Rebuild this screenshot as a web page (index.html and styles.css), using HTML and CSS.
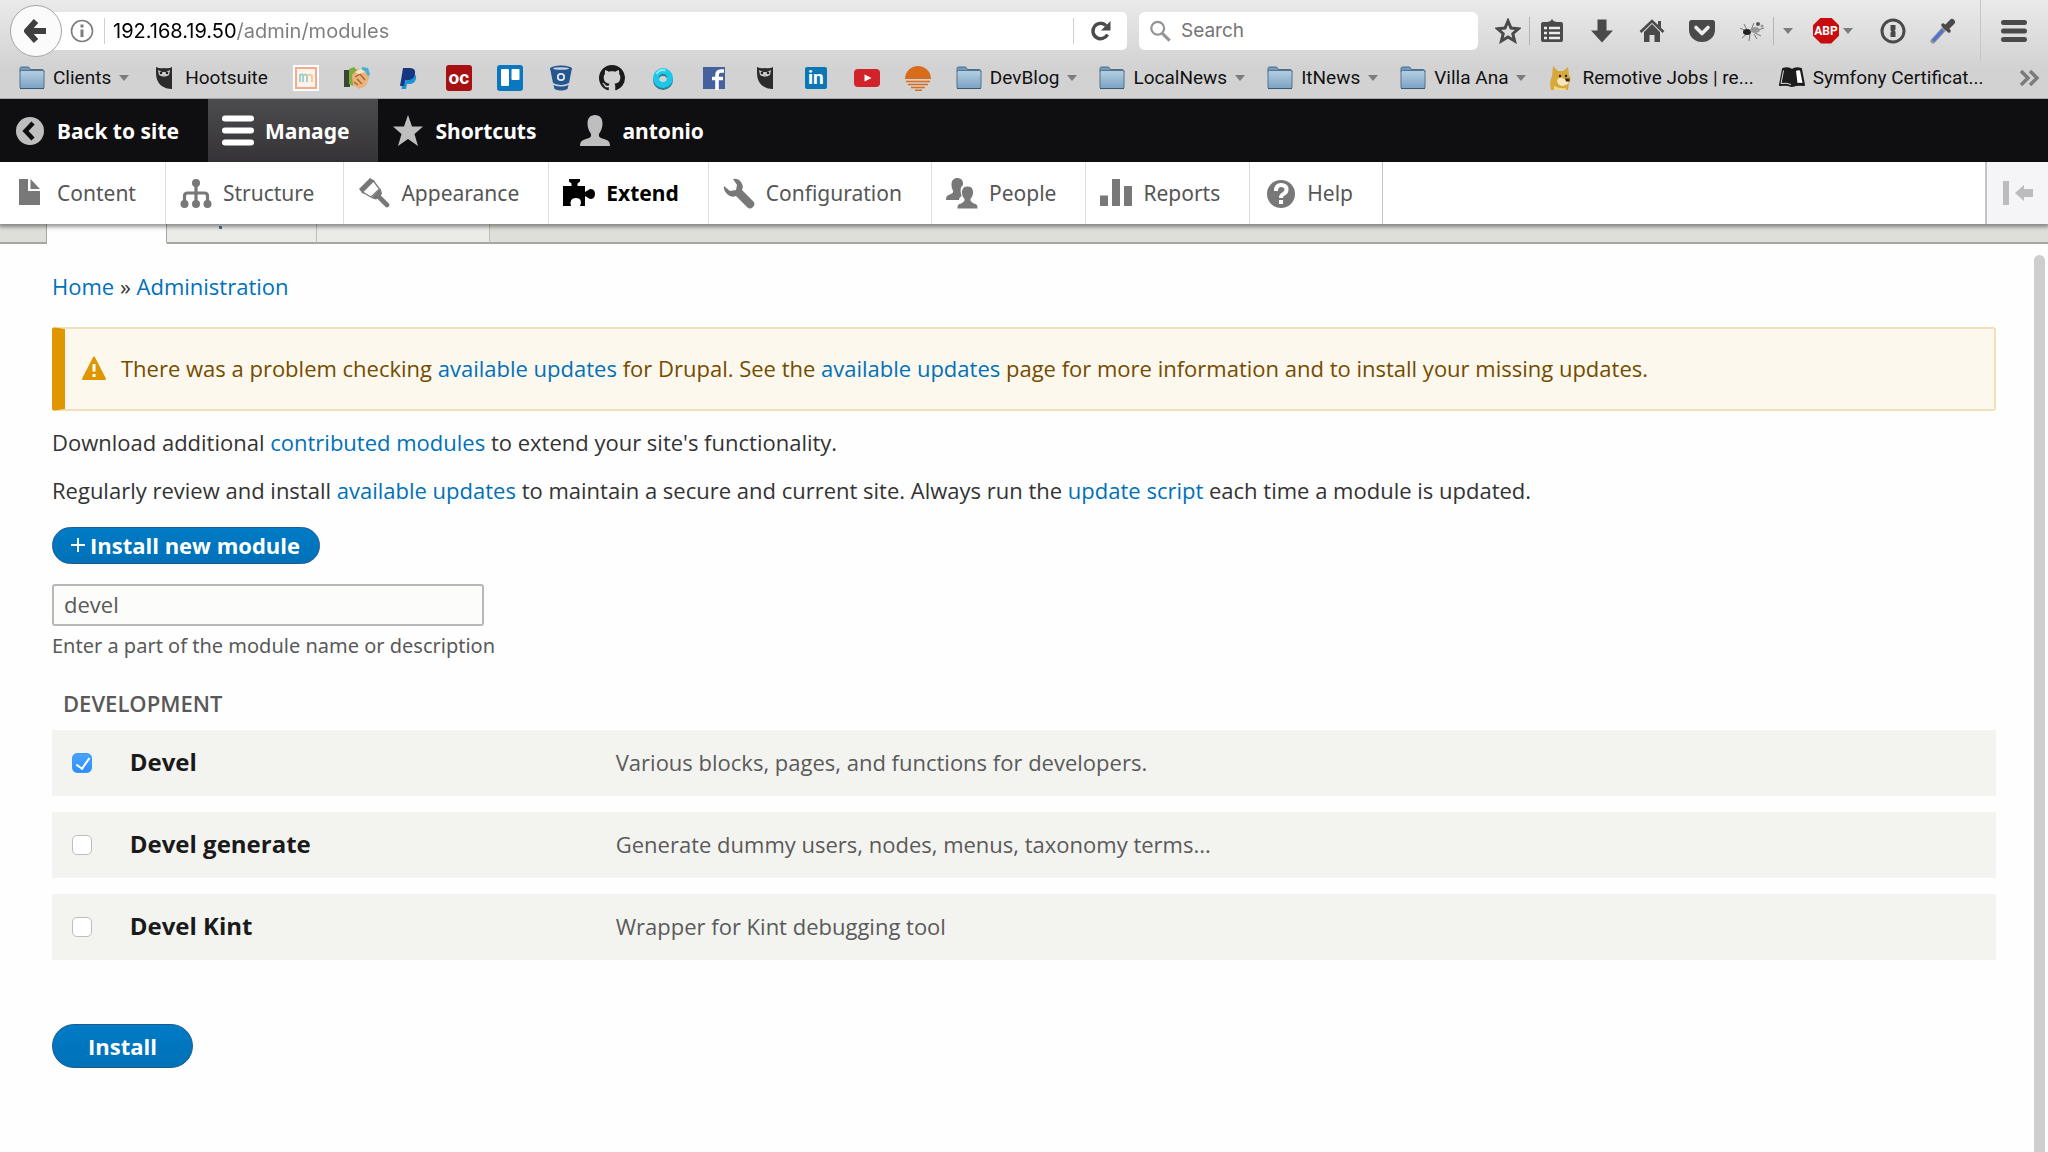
FILE: index.html
```
<!doctype html>
<html lang="en">

<head>
	<meta charset="utf-8">
	<title>Extend</title>
	<link rel="stylesheet" href="styles.css">
</head>

<body>
	<!-- Shared shapes -->
	<svg class="sprite" aria-hidden="true">
		<defs>
			<linearGradient id="folder-fill" x1="0" y1="0" x2="0" y2="1">
				<stop offset="0" stop-color="#b4cfe3"/>
				<stop offset="1" stop-color="#7ba3c4"/>
			</linearGradient>
		</defs>
		<symbol id="folder" viewBox="0 0 26 26">
			<path d="M1 7V3.500Q1 2 2.500 2H9q1 0 1.500 1l.8 1.500H23q2 0 2 2V7z" fill="#6f9abd" stroke="#4d6f8a"/>
			<rect x="1" y="5.500" width="24" height="18" rx="1.500" fill="url(#folder-fill)" stroke="#54738c"/>
			<path d="M1 23.500h24" stroke="#3d5a70"/>
		</symbol>
		<symbol id="owl" viewBox="0 0 26 26">
			<path d="M5 2q4 2 8 1 5 1 8-1v22q-6 0-11-3.500Q5 16 5 8z" fill="#2b2b2b"/>
			<path d="M7 5l4 2h4l4-2-1 5q-5 3-10 0z" fill="#ccc"/>
			<circle cx="10" cy="8" r="1.300" fill="#222"/><circle cx="16" cy="8" r="1.300" fill="#222"/>
			<path d="M12 10h2l-1 2.500z" fill="#aaa"/>
		</symbol>
		<symbol id="caret" viewBox="0 0 10 6"><path d="M0 0h10L5 6z" fill="#7c7b7d"/></symbol>
	</svg>

	<!-- Browser window -->
	<header class="browser">
		<div class="nav-bar">
			<button class="back" aria-label="Back"><svg viewBox="0 0 24 26"><path d="M12 3L3 13l9 10M4 13h18" fill="none" stroke="#3f3f3f" stroke-width="6" stroke-linejoin="round"/></svg></button>
			<div class="url-bar">
				<svg class="info" viewBox="0 0 24 24"><circle cx="12" cy="12" r="10.500" fill="none" stroke="#7d7d7d" stroke-width="1.600"/><path d="M12 10.500V18M12 5.500V8.500" stroke="#7d7d7d" stroke-width="3"/></svg>
				<input class="url" type="text" aria-label="Address" value="192.168.19.50/admin/modules">
				<button class="reload" aria-label="Reload"><svg viewBox="0 0 24 24"><path d="M18.500 15.500A7.700 7.700 0 1 1 17 6.500" fill="none" stroke="#4a4a4a" stroke-width="3.400"/><path d="M21.500 2v9.500H12z" fill="#4a4a4a"/></svg></button>
			</div>
			<div class="search-bar">
				<svg viewBox="0 0 24 24"><circle cx="9.500" cy="9" r="7" fill="none" stroke="#949494" stroke-width="2.400"/><path d="M14.500 14.500l8 8" stroke="#949494" stroke-width="3.400"/></svg>
				<input class="search" type="text" aria-label="Search" placeholder="Search">
			</div>
			<div class="nav-tools">
				<button class="tool star" aria-label="Bookmark this page"><svg viewBox="0 0 26 26"><path d="M13 3l3 7 7.500.700-5.700 5 1.800 7.300L13 19l-6.600 4 1.800-7.300-5.700-5L10 10z" fill="none" stroke="#4a4a4a" stroke-width="3"/></svg></button>
				<button class="tool" aria-label="Bookmarks"><svg viewBox="0 0 26 26"><path d="M9 3.500h2L13 1l2 2.500h2V4h5q2 0 2 2v16q0 2-2 2H4q-2 0-2-2V6q0-2 2-2h5z" fill="#4a4a4a"/><path d="M5 10h3M10 10h11M5 15h3M10 15h11M5 20h3M10 20h11" stroke="#eee" stroke-width="2.600"/></svg></button>
				<button class="tool" aria-label="Downloads"><svg viewBox="0 0 26 26"><path d="M8.500 1.500h9v11H24L13 24.500 2 12.500h6.500z" fill="#4a4a4a"/></svg></button>
				<button class="tool" aria-label="Home"><svg viewBox="0 0 26 26"><path d="M1.500 14L13 3l11.500 11" fill="none" stroke="#4a4a4a" stroke-width="2.600"/><path d="M19 3h3v7l-3-2.500z" fill="#4a4a4a"/><path d="M5 14l8-8 8 8v10h-5.500v-7h-5v7H5z" fill="#4a4a4a"/></svg></button>
				<button class="tool" aria-label="Pocket"><svg viewBox="0 0 26 26"><path d="M2.500 2h21Q26 2 26 5v7a13 12 0 0 1-26 0V5Q0 2 2.500 2z" fill="#4a4a4a"/><path d="M7 9.500l6 6 6-6" fill="none" stroke="#eee" stroke-width="3.600" stroke-linecap="round" stroke-linejoin="round"/></svg></button>
				<button class="tool" aria-label="Firebug"><svg viewBox="0 0 26 26"><g fill="none" stroke="#777" stroke-width="1"><path d="M1 10l6 3M5 6l3 6M3 20l6-5M10 23l1-7M15 5l-3 7M25 10l-9 3M22 18l-6-3M18 21l-3-5"/></g><ellipse cx="8" cy="14" rx="4" ry="3" fill="#222"/><ellipse cx="16" cy="12" rx="5" ry="3" fill="#999"/><circle cx="19" cy="6" r="2" fill="#555"/><circle cx="23" cy="8" r="1.500" fill="#999"/></svg></button>
				<button class="tool-menu" aria-label="Firebug menu"><svg class="caret" viewBox="0 0 10 6"><use href="#caret"/></svg></button>
				<button class="tool abp" aria-label="Adblock Plus">ABP</button>
				<button class="tool-menu abp-menu" aria-label="Adblock menu"><svg class="caret" viewBox="0 0 10 6"><use href="#caret"/></svg></button>
				<button class="tool" aria-label="Passwords"><svg viewBox="0 0 26 26"><circle cx="13" cy="13" r="11" fill="none" stroke="#4a4a4a" stroke-width="3"/><path d="M10.500 7h5v4.500l-1 1 1 1V19h-5v-4.500l1-1-1-1z" fill="#4a4a4a"/></svg></button>
				<button class="tool" aria-label="Color picker"><svg viewBox="0 0 26 26"><path d="M3 23l12-13" stroke="#8f9299" stroke-width="5" stroke-linecap="round"/><path d="M4 22l8-9" stroke="#4d6fd6" stroke-width="3" stroke-linecap="round"/><path d="M13 7l6 6" stroke="#4a4a4a" stroke-width="3.500" stroke-linecap="round"/><path d="M17 9l5-5" stroke="#4a4a4a" stroke-width="6" stroke-linecap="round"/></svg></button>
				<button class="tool menu" aria-label="Menu"><svg viewBox="0 0 26 26"><path d="M2.500 4.500h21M2.500 13h21M2.500 21.500h21" stroke="#4a4a4a" stroke-width="5" stroke-linecap="round"/></svg></button>
			</div>
		</div>
		<nav class="bookmarks" aria-label="Bookmarks toolbar">
			<button class="bookmark"><svg viewBox="0 0 26 26"><use href="#folder"/></svg>Clients<svg class="caret" viewBox="0 0 10 6"><use href="#caret"/></svg></button>
			<a class="bookmark" href="#"><svg viewBox="0 0 26 26"><use href="#owl"/></svg>Hootsuite</a>
			<a class="bookmark" href="#" aria-label="Moqups"><svg viewBox="0 0 26 26"><path d="M0 0h26v26H0z" fill="#fff"/><rect x="3" y="3" width="20" height="20" fill="#fdf3ea" stroke="#f2ab8c" stroke-width="2"/><path d="M7 17v-7q3-2 3 1v6m0-6q3-3 4 0v6" fill="none" stroke="#8ec9c5" stroke-width="1.600"/><path d="M14 11q3-3 5 0v6" fill="none" stroke="#f2c28c" stroke-width="1.600"/></svg></a>
			<a class="bookmark" href="#" aria-label="Handshake"><svg viewBox="0 0 26 26"><path d="M0 5h6v17H0z" fill="#3a4634"/><path d="M5 4l5-2 4 4-5 15-4-2z" fill="#7eae3a"/><path d="M18 2l6 1 2 6-4 7-5-8z" fill="#43b3d3"/><path d="M8 10l6-6 7 2 4 7-3 8-7 3-6-4z" fill="#eab27c"/><path d="M11 12l5-3 5 6M10 17l4 3M13 14l5 5" fill="none" stroke="#a5622e" stroke-width="1.300"/><path d="M11 7l6-3 4 3-6 2z" fill="#fbe5c6"/></svg></a>
			<a class="bookmark" href="#" aria-label="PayPal"><svg viewBox="0 0 26 26"><path d="M9 8h9q4 2 3 6-1.500 5-7 5h-2l-1 5H6.500z" fill="#1b93d6"/><path d="M8 3h7q6 0 5 6-1 6-7.500 6H10l-1 6H5z" fill="#16377f"/></svg></a>
			<a class="bookmark oc" href="#">oc</a>
			<a class="bookmark" href="#" aria-label="Trello"><svg viewBox="0 0 26 26"><rect width="26" height="26" rx="3" fill="#0a78be"/><rect x="4" y="4" width="8" height="17" rx="1" fill="#fff"/><rect x="14.500" y="4" width="8" height="11" rx="1" fill="#fff"/></svg></a>
			<a class="bookmark" href="#" aria-label="Bitbucket"><svg viewBox="0 0 26 26"><path d="M2 3l3 15q8 4 16 0l3-15z" fill="#24568f"/><ellipse cx="13" cy="3.500" rx="11" ry="3" fill="#24568f"/><ellipse cx="13" cy="3.500" rx="8" ry="1.300" fill="#c5d0dc"/><circle cx="13" cy="12" r="3.200" fill="none" stroke="#e3e8ee" stroke-width="1.800"/><path d="M5.500 20q7.500 3 15 0l-1 4q-6.500 3-13 0z" fill="#24568f"/></svg></a>
			<a class="bookmark" href="#" aria-label="GitHub"><svg viewBox="0 0 16 16"><path d="M8 0C3.580 0 0 3.580 0 8c0 3.540 2.290 6.530 5.470 7.590.4.070.55-.17.55-.38 0-.19-.01-.82-.01-1.490-2.010.37-2.530-.49-2.690-.94-.09-.23-.48-.94-.82-1.130-.28-.15-.68-.52-.01-.53.63-.01 1.080.58 1.230.82.72 1.210 1.870.87 2.330.66.07-.52.28-.87.51-1.070-1.780-.2-3.640-.89-3.640-3.950 0-.87.31-1.590.82-2.150-.08-.2-.36-1.020.08-2.120 0 0 .67-.21 2.200.82.64-.18 1.320-.27 2-.27s1.360.09 2 .27c1.530-1.040 2.200-.82 2.200-.82.44 1.100.16 1.920.08 2.120.51.56.82 1.270.82 2.150 0 3.070-1.870 3.750-3.650 3.950.29.25.54.73.54 1.480 0 1.070-.01 1.930-.01 2.200 0 .21.15.46.55.38A8.010 8.010 0 0 0 16 8c0-4.420-3.580-8-8-8z" fill="#1b1b1c"/></svg></a>
			<a class="bookmark" href="#" aria-label="Ring"><svg viewBox="0 0 26 26"><circle cx="13" cy="15" r="7" fill="none" stroke="#287f93" stroke-width="6"/><circle cx="13" cy="13" r="7" fill="none" stroke="#1cc8ea" stroke-width="6"/><path d="M6.500 9a8 8 0 0 1 9-3.500" fill="none" stroke="#8feafa" stroke-width="2"/></svg></a>
			<a class="bookmark" href="#" aria-label="Facebook"><svg viewBox="0 0 26 26"><path d="M2 2h22v22H2z" fill="#46629e"/><path d="M23 6h-3q-4 0-4 4v15M11 13.500h11" fill="none" stroke="#fff" stroke-width="3.600"/></svg></a>
			<a class="bookmark" href="#" aria-label="Hootsuite dashboard"><svg viewBox="0 0 26 26"><use href="#owl"/></svg></a>
			<a class="bookmark linkedin" href="#">in</a>
			<a class="bookmark" href="#" aria-label="YouTube"><svg viewBox="0 0 26 26"><rect y="4" width="26" height="18" rx="4" fill="#d2232a"/><path d="M10.500 9.500v7l7-3.500z" fill="#fff"/></svg></a>
			<a class="bookmark" href="#" aria-label="Laravel News"><svg viewBox="0 0 26 26"><path d="M0 14a13 13 0 1 1 26 0z" fill="#d96c1a"/><path d="M1 16.500h24M3 19.500h20M6 22.500h14M10 25.300h7" stroke="#d96c1a" stroke-width="1.500"/></svg></a>
			<button class="bookmark"><svg viewBox="0 0 26 26"><use href="#folder"/></svg>DevBlog<svg class="caret" viewBox="0 0 10 6"><use href="#caret"/></svg></button>
			<button class="bookmark"><svg viewBox="0 0 26 26"><use href="#folder"/></svg>LocalNews<svg class="caret" viewBox="0 0 10 6"><use href="#caret"/></svg></button>
			<button class="bookmark"><svg viewBox="0 0 26 26"><use href="#folder"/></svg>ItNews<svg class="caret" viewBox="0 0 10 6"><use href="#caret"/></svg></button>
			<button class="bookmark"><svg viewBox="0 0 26 26"><use href="#folder"/></svg>Villa Ana<svg class="caret" viewBox="0 0 10 6"><use href="#caret"/></svg></button>
			<a class="bookmark" href="#"><svg viewBox="0 0 26 26"><path d="M3 25q-2-8 1-14L5 1l5 5h5l5-4 1 8q3 4 0 8l-1 7z" fill="#d7a93b"/><path d="M9 15q3-4 7-1l5 2q0 4-7 5-5-1-5-6z" fill="#f5e6bb"/><circle cx="12" cy="11" r="1.200" fill="#222"/><circle cx="18" cy="11" r="1.200" fill="#222"/><path d="M17 13.500h4.500v3H18z" fill="#2a2521"/><path d="M6 21q6 3 12 2v2H6z" fill="#efd98f"/></svg>Remotive Jobs | re...</a>
			<a class="bookmark" href="#"><svg viewBox="0 0 26 26"><path d="M4 4q5-2 9 1 4-3 9-1l3 16q-6-1-12 1-6-2-12-1z" fill="#1c1c1c" stroke="#1c1c1c" stroke-width="2" stroke-linejoin="round"/><path d="M17 6q2-1 4-.5L23.500 18q-3-.5-5 0z" fill="#fff"/><path d="M4.500 5.500L2 18.500q5-1 10 1" fill="none" stroke="#ddd" stroke-width="1"/></svg>Symfony Certificat...</a>
			<button class="more" aria-label="More bookmarks"><svg viewBox="0 0 22 16"><path d="M2 1l7 7-7 7M11 1l7 7-7 7" fill="none" stroke="#7b7a7c" stroke-width="3.500"/></svg></button>
		</nav>
	</header>

	<!-- Admin toolbar -->
	<nav class="toolbar" aria-label="Administration">
		<a class="toolbar-item" href="#"><svg viewBox="0 0 32 32"><circle cx="16" cy="16" r="14" fill="#bebebe"/><path d="M19 8l-7.500 8 7.500 8" fill="none" stroke="#0f0e10" stroke-width="4.500"/></svg>Back to site</a>
		<a class="toolbar-item active" href="#"><svg viewBox="0 0 32 32"><path d="M3 3.500h26M3 15.500h26M3 27.500h26" stroke="#fff" stroke-width="6" stroke-linecap="round"/></svg>Manage</a>
		<a class="toolbar-item" href="#"><svg viewBox="0 0 32 32"><path d="M16 0l4 11.500h11l-8.500 7.500 3.500 12L16 24 6 31l3.500-12L1 11.500h11z" fill="#bebebe"/></svg>Shortcuts</a>
		<a class="toolbar-item" href="#"><svg viewBox="0 0 32 32"><path d="M16 0c5 0 7.500 3.500 7.500 8.500 0 5-2 8-3.500 10.500-.5 3 1 4 5 5 4 1 6 2.500 6 7H1c0-4.500 2-6 6-7s5.500-2 5-5c-1.500-2.500-3.500-5.500-3.500-10.500C8.500 3.500 11 0 16 0z" fill="#bebebe"/></svg>antonio</a>
	</nav>

	<div class="tray">
		<nav class="tray-menu" aria-label="Manage">
			<a class="tray-item" href="#"><svg viewBox="0 0 32 32"><path d="M5 2h9v12h12v14H5z"/><path d="M16.500 2L26 12h-9.500z"/></svg>Content</a>
			<a class="tray-item" href="#"><svg viewBox="0 0 32 32"><circle cx="16" cy="6" r="4"/><circle cx="4.500" cy="27" r="4"/><circle cx="16" cy="27" r="4"/><circle cx="27.500" cy="27" r="4"/><path d="M16 6v20M4.500 26v-7q0-3 3-3h17q3 0 3 3v7" fill="none" stroke="#787878" stroke-width="3.200"/></svg>Structure</a>
			<a class="tray-item" href="#"><svg viewBox="0 0 32 32"><path d="M1 12L12 1l5 3L5 17z"/><path d="M4.500 15L15.500 4l6 8-8.500 8z" fill="#fff" stroke="#787878" stroke-width="1.300"/><path d="M13 21l9.500-9.500 1.500 5-2 3-4 3z"/><path d="M20 19l9 9" stroke="#787878" stroke-width="4.600" stroke-linecap="round"/></svg>Appearance</a>
			<a class="tray-item active" href="#"><svg viewBox="0 0 32 32"><path d="M0 9h8.500V6.500L6 4.500V2h11v2.500l-2.500 2V9H22v6l5-3q5 0 5 5t-5 5l-5-3v10h-5q3-8-4-8t-5 8H0z"/></svg>Extend</a>
			<a class="tray-item" href="#"><svg viewBox="0 0 32 32"><path d="M10 2q5-1 8 3 3 4 1 8l11 11q3 3 0 6t-6 0L13 19q-5 2-9-2-4-4-3-8l6 5 6-1 1-5z"/></svg>Configuration</a>
			<a class="tray-item" href="#"><svg viewBox="0 0 32 32"><path d="M11.500 1c4 0 6 3 5.500 7-3 2-3 7-1 11-2 1-3 2-3 4H0c0-4 2-5 5-6 2-1 2.500-2 2-3.500C6 12 5.500 10 5.500 7.500c0-4 2-6.500 6-6.500z"/><path d="M21.500 9c4.500 0 6 3 6 6.500S26 20 25 22c-.5 2.500 1 3 3 4 3 1 4 2 4 6H11c0-4 1-5 4-6 2-1 3.500-1.500 3-4-1.500-2-2.500-3.500-2.500-6.500s1.500-6.500 6-6.500z" stroke="#fff" stroke-width="1"/></svg>People</a>
			<a class="tray-item" href="#"><svg viewBox="0 0 32 32"><path d="M0 18.500h8V29H0zM12 2h8v27h-8zM24 9h8v20h-8z"/></svg>Reports</a>
			<a class="tray-item" href="#"><svg viewBox="0 0 32 32"><circle cx="17" cy="17" r="14"/><path d="M12 14q0-6 5-6 5.500 0 5.500 4.500 0 3-3 4.500-2.500 1-2.500 4" fill="none" stroke="#fff" stroke-width="4"/><path d="M15 23h4v4h-4z" fill="#fff"/></svg>Help</a>
		</nav>
		<button class="tray-toggle" aria-label="Vertical orientation"><svg viewBox="0 0 32 26"><path d="M1 1h6v24H1z"/><path d="M13 13l9-8v4h9v8h-9v4z"/></svg></button>
	</div>

	<!-- Bottom edge of the page tabs, scrolled under the tray -->
	<div class="tabs">
		<div class="tab-space"></div>
		<div class="tab tab-active"></div>
		<div class="tab tab-update"></div>
		<div class="tab tab-last"></div>
	</div>

	<main class="page">
		<nav class="breadcrumb" aria-label="Breadcrumb"><a href="#">Home</a> » <a href="#">Administration</a></nav>

		<div class="message" role="alert">
			<svg viewBox="0 0 24 24"><path d="M12 1.500L23 23H1z" fill="#e09600" stroke="#e09600" stroke-width="2" stroke-linejoin="round"/><path d="M12 8v7.500M12 18v3" stroke="#fff" stroke-width="3"/></svg>
			<p>There was a problem checking <a href="#">available updates</a> for Drupal. See the <a href="#">available updates</a> page for more information and to install your missing updates.</p>
		</div>

		<p class="intro">Download additional <a href="#">contributed modules</a> to extend your site's functionality.</p>
		<p class="intro">Regularly review and install <a href="#">available updates</a> to maintain a secure and current site. Always run the <a href="#">update script</a> each time a module is updated.</p>

		<button class="btn btn-small"><svg viewBox="0 0 14 14"><path d="M7 0v14M0 7h14" stroke="#fff" stroke-width="2"/></svg>Install new module</button>

		<form class="modules">
			<input class="filter" id="filter" type="text" value="devel">
			<label class="filter-help" for="filter">Enter a part of the module name or description</label>

			<h2 class="package">Development</h2>
			<table class="module-list">
				<tr>
					<td class="check"><input type="checkbox" id="devel" checked></td>
					<td class="name"><label for="devel">Devel</label></td>
					<td>Various blocks, pages, and functions for developers.</td>
				</tr>
				<tr>
					<td class="check"><input type="checkbox" id="devel-generate"></td>
					<td class="name"><label for="devel-generate">Devel generate</label></td>
					<td>Generate dummy users, nodes, menus, taxonomy terms...</td>
				</tr>
				<tr>
					<td class="check"><input type="checkbox" id="devel-kint"></td>
					<td class="name"><label for="devel-kint">Devel Kint</label></td>
					<td>Wrapper for Kint debugging tool</td>
				</tr>
			</table>

			<button class="btn btn-install" type="button">Install</button>
		</form>
		<div class="scrollbar"></div>
	</main>
</body>

</html>
```

FILE: styles.css
```
* { margin: 0; padding: 0; box-sizing: border-box; }
body { min-height: 100vh; display: flex; flex-direction: column; background-color: #fefefe; color: #333; font-family: 'Open Sans', 'Noto Sans', sans-serif; font-size: 22px; line-height: 28px; }
a { color: #0071b8; text-decoration: none; }
button { border: none; background: none; font: inherit; color: inherit; cursor: pointer; }
svg { display: block; flex: none; }
.sprite { position: absolute; width: 0; height: 0; }

/* browser window */
.browser { background: linear-gradient(#eaeaea, #d3d2d3 70%); border-bottom: 1px solid #a9a9a9; font-family: Roboto, Inter, sans-serif; font-size: 19px; color: #111; }
.nav-bar { display: flex; align-items: center; height: 61px; padding-left: 10px; }
.back { z-index: 1; display: flex; align-items: center; justify-content: center; width: 52px; height: 52px; margin-right: -26px; border: 1px solid #a5a5a5; border-radius: 50%; background-color: #fbfbfb; }
.back svg { width: 24px; height: 26px; }
.url-bar { flex: 1; display: flex; align-items: center; height: 38px; margin-right: 12px; padding-left: 34px; background-color: #fff; border-radius: 0 5px 5px 0; }
.info { width: 24px; height: 24px; }
.url { flex: 1; min-width: 0; height: 26px; margin-left: 10px; padding-left: 8px; border: none; border-left: 1px solid #cfcfcf; outline: none; font-family: Inter, sans-serif; font-size: 20px; color: transparent; background: linear-gradient(to right, #000 132px, #7d7d7d 132px); -webkit-background-clip: text; background-clip: text; }
.reload { display: flex; align-items: center; justify-content: center; width: 54px; height: 26px; border-left: 1px solid #cfcfcf; }
.reload svg { width: 24px; height: 24px; }
.search-bar { display: flex; align-items: center; gap: 10px; width: 339px; height: 38px; padding: 0 10px; background-color: #fff; border-radius: 6px; }
.search-bar svg { width: 22px; height: 22px; }
.search { flex: 1; min-width: 0; border: none; outline: none; background: none; font-family: Inter, sans-serif; font-size: 19px; }
.search::placeholder { color: #757575; }
.nav-tools { display: flex; align-items: center; height: 61px; }
.tool { display: flex; align-items: center; justify-content: center; width: 26px; margin-right: 24px; }
.tool svg { width: 26px; height: 26px; }
.tool.star { width: 52px; height: 28px; margin-right: 9px; padding-left: 8px; border-right: 1px solid #b5b5b5; }
.tool-menu { display: flex; align-items: center; justify-content: center; width: 28px; height: 28px; margin: 0 12px 0 -16px; border-left: 1px solid #b5b5b5; }
.caret { width: 10px; height: 6px; }
.tool.abp { height: 26px; margin-right: 0; background-color: #c70d0d; clip-path: polygon(30% 0, 70% 0, 100% 30%, 100% 70%, 70% 100%, 30% 100%, 0 70%, 0 30%); color: #fff; font-size: 12px; font-weight: bold; }
.tool-menu.abp-menu { width: 18px; margin: 0 23px 0 0; border: none; }
.tool.menu { width: 68px; height: 61px; margin-right: 0; padding-right: 2px; border-left: 1px solid #c6c6c6; }

.bookmarks { display: flex; align-items: center; gap: 25px; height: 37px; padding: 0 7px 4px 19px; white-space: nowrap; }
.bookmark { display: flex; align-items: center; gap: 8px; height: 26px; color: #111; line-height: 26px; }
.bookmark svg { width: 26px; height: 26px; }
.bookmark .caret { width: 10px; height: 6px; margin-right: -3px; }
.oc { justify-content: center; width: 26px; border-radius: 3px; background-color: #a80f12; color: #fff; font-weight: bold; }
.linkedin { justify-content: center; width: 22px; height: 22px; margin: 0 2px; border-radius: 2px; background-color: #0b77b4; color: #fff; font-weight: bold; line-height: 22px; }
.more { margin-left: auto; }
.more svg { width: 22px; height: 16px; }

/* admin toolbar */
.toolbar, .tray { font-family: 'Noto Sans', 'Open Sans', sans-serif; font-size: 21px; }
.toolbar { display: flex; height: 63px; background-color: #0f0e10; }
.toolbar-item { display: flex; align-items: center; gap: 11px; padding: 0 29px 0 14px; color: #fff; font-weight: bold; }
.toolbar-item svg { width: 32px; height: 32px; }
.toolbar-item.active { background: linear-gradient(#4c4b4d, #353337); }
.tray { z-index: 1; display: flex; justify-content: space-between; height: 62px; background-color: #fff; box-shadow: 0 2px 4px 1px rgba(0, 0, 0, 0.4); }
.tray-menu { display: flex; }
.tray-item { display: flex; align-items: center; gap: 11px; padding: 0 29px 0 14px; border-right: 1px solid #ddd; color: #565656; }
.tray-item:last-child { border-color: #c4c4c4; }
.tray-item svg { width: 32px; height: 32px; fill: #787878; }
.tray-item.active { color: #000; font-weight: bold; }
.tray-item.active svg { fill: #000; }
.tray-toggle { display: flex; align-items: center; justify-content: center; width: 63px; border-left: 2px solid #c4c3c5; background-color: #f5f4f6; }
.tray-toggle svg { width: 32px; height: 26px; fill: #bcbbbd; }

.tabs { display: flex; height: 20px; background-color: #dfdfd9; border-bottom: 2px solid #a6a6a2; }
.tab-space { width: 47px; border-right: 1px solid #a6a6a2; }
.tab { width: 150px; height: 20px; background-color: #ebece8; border-right: 1px solid #bfbfba; border-bottom: 2px solid #a6a6a2; }
.tab-active { width: 120px; background-color: #fefefe; border-right-color: #a6a6a2; border-bottom-color: #fefefe; }
.tab-update::before { content: ''; display: block; width: 3px; height: 3px; margin: 2px 0 0 52px; background-color: #3a7dad; }
.tab-last { width: 173px; }

/* page */
.page { position: relative; flex: 1; padding: 28px 52px; }
.breadcrumb { margin-bottom: 27px; }
.message { display: flex; align-items: center; gap: 15px; height: 84px; margin-bottom: 17px; padding: 0 0 2px 17px; border: 2px solid #f1e0bb; border-left: 13px solid #e09600; border-radius: 3px; background-color: #fdf8ed; color: #734c00; }
.message svg { width: 24px; height: 24px; }
.intro { margin-bottom: 20px; }
.btn { display: flex; align-items: center; justify-content: center; border: 1px solid #1e5c90; border-radius: 22px; background: linear-gradient(#007bc6, #0071b8); color: #fff; font-weight: bold; }
.btn-small { gap: 5px; height: 37px; margin: 23px 0 20px; padding: 0 19px 2px 18px; }
.btn-small svg { width: 14px; height: 14px; }
.btn-install { height: 44px; padding: 0 35px; }
.filter { display: block; width: 432px; height: 42px; padding: 0 10px 2px; border: 2px solid #b8b8b8; border-radius: 3px; outline: none; background-color: #fcfcfa; color: #595959; font: inherit; }
.filter-help { display: block; margin-top: 6px; color: #595959; font-family: 'Noto Sans', sans-serif; font-size: 20px; }
.package { margin: 29px 11px 13px; color: #595959; font-size: 22px; font-weight: 600; line-height: 28px; text-transform: uppercase; }
.module-list { width: 100%; margin-bottom: 48px; border-spacing: 0; table-layout: fixed; color: #5a5a5a; }
.module-list td { height: 82px; padding-bottom: 2px; border-bottom: 16px solid #fefefe; background-color: #f3f3f0; }
.module-list .check { width: 4%; padding-bottom: 0; }
.module-list .name { width: 25%; color: #1a1a1a; font-size: 24px; font-weight: bold; }
.check input { display: block; appearance: none; width: 20px; height: 20px; margin-left: 20px; border: 1px solid #bdbdbd; border-radius: 5px; background-color: #fff; }
.check input:checked { border-color: #3b99fc; background: linear-gradient(#4ba3fc, #2f8dfb); }
.check input:checked::before { content: ''; display: block; width: 6px; height: 12px; margin: 1px 0 0 6px; border: solid #fff; border-width: 0 2px 2px 0; transform: rotate(35deg); }
.scrollbar { position: absolute; top: 11px; right: 3px; bottom: 0; width: 11px; border-radius: 6px 6px 0 0; background-color: #cfcecf; }
```
